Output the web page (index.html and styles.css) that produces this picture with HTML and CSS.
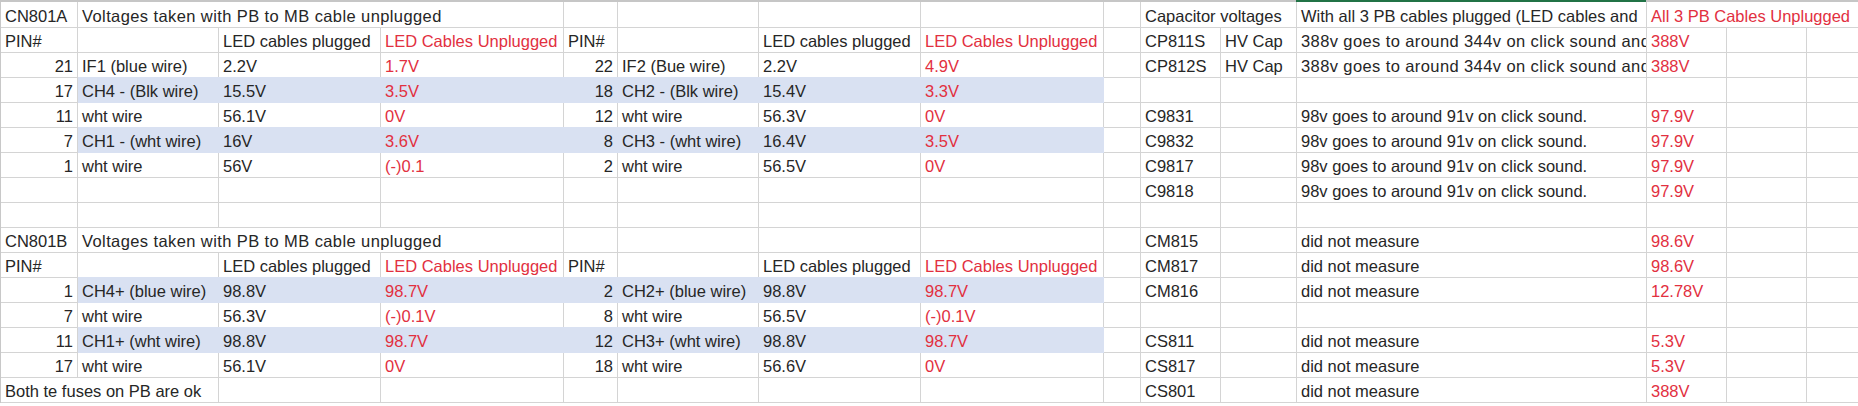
FILE: index.html
```html
<!DOCTYPE html>
<html>
<head>
<meta charset="utf-8">
<title>Sheet</title>
<link rel="stylesheet" href="styles.css">
</head>
<body>
<div class="topbar"><div class="hdr-rest"></div><div class="hdr-sel"></div><div class="hdr-end"></div></div>
<div class="sheet">
  <!-- row 1 -->
  <div class="c">CN801A</div>
  <div class="c s3 wide">Voltages taken with PB to MB cable unplugged</div>
  <div class="c"></div><div class="c"></div><div class="c"></div><div class="c"></div><div class="c"></div>
  <div class="c s2">Capacitor voltages</div>
  <div class="c">With all 3 PB cables plugged (LED cables and</div>
  <div class="c s3 red">All 3 PB Cables Unplugged</div>
  <!-- row 2 -->
  <div class="c">PIN#</div>
  <div class="c"></div>
  <div class="c">LED cables plugged</div>
  <div class="c red">LED Cables Unplugged</div>
  <div class="c">PIN#</div>
  <div class="c"></div>
  <div class="c">LED cables plugged</div>
  <div class="c red">LED Cables Unplugged</div>
  <div class="c"></div>
  <div class="c">CP811S</div>
  <div class="c">HV Cap</div>
  <div class="c wide">388v goes to around 344v on click sound and</div>
  <div class="c red">388V</div>
  <div class="c"></div><div class="c"></div>
  <!-- row 3 -->
  <div class="c num">21</div>
  <div class="c">IF1 (blue wire)</div>
  <div class="c">2.2V</div>
  <div class="c red">1.7V</div>
  <div class="c num">22</div>
  <div class="c">IF2 (Bue wire)</div>
  <div class="c">2.2V</div>
  <div class="c red">4.9V</div>
  <div class="c"></div>
  <div class="c">CP812S</div>
  <div class="c">HV Cap</div>
  <div class="c wide">388v goes to around 344v on click sound and</div>
  <div class="c red">388V</div>
  <div class="c"></div><div class="c"></div>
  <!-- row 4 -->
  <div class="c num">17</div>
  <div class="c hl">CH4 - (Blk wire)</div>
  <div class="c hl">15.5V</div>
  <div class="c hl red">3.5V</div>
  <div class="c hl num">18</div>
  <div class="c hl">CH2 - (Blk wire)</div>
  <div class="c hl">15.4V</div>
  <div class="c hl red">3.3V</div>
  <div class="c"></div>
  <div class="c"></div>
  <div class="c"></div>
  <div class="c"></div>
  <div class="c"></div>
  <div class="c"></div><div class="c"></div>
  <!-- row 5 -->
  <div class="c num">11</div>
  <div class="c">wht wire</div>
  <div class="c">56.1V</div>
  <div class="c red">0V</div>
  <div class="c num">12</div>
  <div class="c">wht wire</div>
  <div class="c">56.3V</div>
  <div class="c red">0V</div>
  <div class="c"></div>
  <div class="c">C9831</div>
  <div class="c"></div>
  <div class="c">98v goes to around 91v on click sound.</div>
  <div class="c red">97.9V</div>
  <div class="c"></div><div class="c"></div>
  <!-- row 6 -->
  <div class="c num">7</div>
  <div class="c hl">CH1 - (wht wire)</div>
  <div class="c hl">16V</div>
  <div class="c hl red">3.6V</div>
  <div class="c hl num">8</div>
  <div class="c hl">CH3 - (wht wire)</div>
  <div class="c hl">16.4V</div>
  <div class="c hl red">3.5V</div>
  <div class="c"></div>
  <div class="c">C9832</div>
  <div class="c"></div>
  <div class="c">98v goes to around 91v on click sound.</div>
  <div class="c red">97.9V</div>
  <div class="c"></div><div class="c"></div>
  <!-- row 7 -->
  <div class="c num">1</div>
  <div class="c">wht wire</div>
  <div class="c">56V</div>
  <div class="c red">(-)0.1</div>
  <div class="c num">2</div>
  <div class="c">wht wire</div>
  <div class="c">56.5V</div>
  <div class="c red">0V</div>
  <div class="c"></div>
  <div class="c">C9817</div>
  <div class="c"></div>
  <div class="c">98v goes to around 91v on click sound.</div>
  <div class="c red">97.9V</div>
  <div class="c"></div><div class="c"></div>
  <!-- row 8 -->
  <div class="c"></div><div class="c"></div><div class="c"></div><div class="c"></div><div class="c"></div><div class="c"></div><div class="c"></div><div class="c"></div><div class="c"></div>
  <div class="c">C9818</div>
  <div class="c"></div>
  <div class="c">98v goes to around 91v on click sound.</div>
  <div class="c red">97.9V</div>
  <div class="c"></div><div class="c"></div>
  <!-- row 9 -->
  <div class="c"></div><div class="c"></div><div class="c"></div><div class="c"></div><div class="c"></div><div class="c"></div><div class="c"></div><div class="c"></div><div class="c"></div><div class="c"></div><div class="c"></div><div class="c"></div><div class="c"></div><div class="c"></div><div class="c"></div>
  <!-- row 10 -->
  <div class="c">CN801B</div>
  <div class="c s3 wide">Voltages taken with PB to MB cable unplugged</div>
  <div class="c"></div><div class="c"></div><div class="c"></div><div class="c"></div><div class="c"></div>
  <div class="c">CM815</div>
  <div class="c"></div>
  <div class="c">did not measure</div>
  <div class="c red">98.6V</div>
  <div class="c"></div><div class="c"></div>
  <!-- row 11 -->
  <div class="c">PIN#</div>
  <div class="c"></div>
  <div class="c">LED cables plugged</div>
  <div class="c red">LED Cables Unplugged</div>
  <div class="c">PIN#</div>
  <div class="c"></div>
  <div class="c">LED cables plugged</div>
  <div class="c red">LED Cables Unplugged</div>
  <div class="c"></div>
  <div class="c">CM817</div>
  <div class="c"></div>
  <div class="c">did not measure</div>
  <div class="c red">98.6V</div>
  <div class="c"></div><div class="c"></div>
  <!-- row 12 -->
  <div class="c num">1</div>
  <div class="c hl">CH4+ (blue wire)</div>
  <div class="c hl">98.8V</div>
  <div class="c hl red">98.7V</div>
  <div class="c hl num">2</div>
  <div class="c hl">CH2+ (blue wire)</div>
  <div class="c hl">98.8V</div>
  <div class="c hl red">98.7V</div>
  <div class="c"></div>
  <div class="c">CM816</div>
  <div class="c"></div>
  <div class="c">did not measure</div>
  <div class="c red">12.78V</div>
  <div class="c"></div><div class="c"></div>
  <!-- row 13 -->
  <div class="c num">7</div>
  <div class="c">wht wire</div>
  <div class="c">56.3V</div>
  <div class="c red">(-)0.1V</div>
  <div class="c num">8</div>
  <div class="c">wht wire</div>
  <div class="c">56.5V</div>
  <div class="c red">(-)0.1V</div>
  <div class="c"></div><div class="c"></div><div class="c"></div><div class="c"></div><div class="c"></div><div class="c"></div><div class="c"></div>
  <!-- row 14 -->
  <div class="c num">11</div>
  <div class="c hl">CH1+ (wht wire)</div>
  <div class="c hl">98.8V</div>
  <div class="c hl red">98.7V</div>
  <div class="c hl num">12</div>
  <div class="c hl">CH3+ (wht wire)</div>
  <div class="c hl">98.8V</div>
  <div class="c hl red">98.7V</div>
  <div class="c"></div>
  <div class="c">CS811</div>
  <div class="c"></div>
  <div class="c">did not measure</div>
  <div class="c red">5.3V</div>
  <div class="c"></div><div class="c"></div>
  <!-- row 15 -->
  <div class="c num">17</div>
  <div class="c">wht wire</div>
  <div class="c">56.1V</div>
  <div class="c red">0V</div>
  <div class="c num">18</div>
  <div class="c">wht wire</div>
  <div class="c">56.6V</div>
  <div class="c red">0V</div>
  <div class="c"></div>
  <div class="c">CS817</div>
  <div class="c"></div>
  <div class="c">did not measure</div>
  <div class="c red">5.3V</div>
  <div class="c"></div><div class="c"></div>
  <!-- row 16 -->
  <div class="c s2">Both te fuses on PB are ok</div>
  <div class="c"></div><div class="c"></div><div class="c"></div><div class="c"></div><div class="c"></div><div class="c"></div><div class="c"></div>
  <div class="c">CS801</div>
  <div class="c"></div>
  <div class="c">did not measure</div>
  <div class="c red">388V</div>
  <div class="c"></div><div class="c"></div>
</div>
</body>
</html>
```

FILE: styles.css
```css
html, body {
  margin: 0;
  padding: 0;
  background: #ffffff;
  overflow: hidden;
}

body {
  font-family: "Liberation Sans", Arial, sans-serif;
  font-size: 16.5px;
  color: #262626;
}

.topbar {
  display: grid;
  grid-template-columns: 1296px 350px 1fr;
  height: 2px;
}

.hdr-rest, .hdr-end {
  background: #c6c6c6;
}

.hdr-sel {
  background: #217346;
}

.sheet {
  display: grid;
  grid-template-columns: 77px 141px 162px 183px 54px 141px 162px 183px 37px 80px 76px 350px 80px 80px 80px;
  grid-template-rows: 26px repeat(15, 25px);
  border-left: 1px solid #c8c8c8;
  width: max-content;
}

.c {
  box-sizing: border-box;
  border-right: 1px solid #d4d4d4;
  border-bottom: 1px solid #d4d4d4;
  padding: 0 4px 2px 4px;
  display: flex;
  align-items: flex-end;
  white-space: nowrap;
  overflow: hidden;
  line-height: 18px;
  min-width: 0;
}

.wide {
  letter-spacing: 0.4px;
}

.s2 {
  grid-column: span 2;
}

.s3 {
  grid-column: span 3;
}

.num {
  justify-content: flex-end;
}

.red {
  color: #e2303f;
}

.hl {
  background: #d9e1f2;
  border-color: #d9e1f2;
  box-shadow: 0 -1px 0 #d9e1f2;
}
```
